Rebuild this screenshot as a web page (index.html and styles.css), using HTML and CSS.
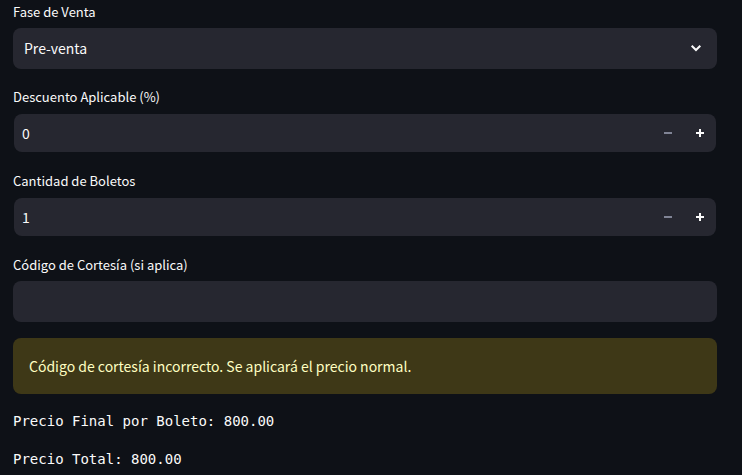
FILE: index.html
```html
<!DOCTYPE html>
<html lang="es">
<head>
<meta charset="utf-8">
<meta name="viewport" content="width=device-width, initial-scale=1">
<title>Venta de boletos</title>
<link rel="stylesheet" href="styles.css">
</head>
<body>
<main class="page">
  <form class="form">
    <div class="field">
      <label class="label" for="fase">Fase de Venta</label>
      <div class="control select-box">
        <select class="select" id="fase">
          <option selected>Pre-venta</option>
        </select>
        <svg class="chevron" viewBox="0 0 12 8" aria-hidden="true"><path d="M1.700 1.700l4.300 4.300 4.300-4.300"/></svg>
      </div>
    </div>
    <div class="field">
      <label class="label" for="descuento">Descuento Aplicable (%)</label>
      <div class="control number-box">
        <input class="number" id="descuento" type="number" min="0" value="0">
        <button class="step" type="button" aria-label="Restar descuento" disabled><svg class="sign" viewBox="0 0 8 8" aria-hidden="true"><path d="M0 3h8v2H0z"/></svg></button>
        <button class="step" type="button" aria-label="Sumar descuento"><svg class="sign" viewBox="0 0 8 8" aria-hidden="true"><path d="M3 0h2v3h3v2H5v3H3V5H0V3h3z"/></svg></button>
      </div>
    </div>
    <div class="field">
      <label class="label" for="cantidad">Cantidad de Boletos</label>
      <div class="control number-box">
        <input class="number" id="cantidad" type="number" min="1" value="1">
        <button class="step" type="button" aria-label="Restar boleto" disabled><svg class="sign" viewBox="0 0 8 8" aria-hidden="true"><path d="M0 3h8v2H0z"/></svg></button>
        <button class="step" type="button" aria-label="Sumar boleto"><svg class="sign" viewBox="0 0 8 8" aria-hidden="true"><path d="M3 0h2v3h3v2H5v3H3V5H0V3h3z"/></svg></button>
      </div>
    </div>
    <div class="field">
      <label class="label" for="codigo">Código de Cortesía (si aplica)</label>
      <input class="control text" id="codigo" type="text">
    </div>
  </form>
  <p class="alert" role="alert">Código de cortesía incorrecto. Se aplicará el precio normal.</p>
  <p class="result">Precio Final por Boleto: 800.00</p>
  <p class="result">Precio Total: 800.00</p>
</main>
</body>
</html>
```
FILE: styles.css
```css
* {
  box-sizing: border-box;
}

body {
  margin: 0;
  background: #0e1117;
  color: #fafafa;
  font-family: "Source Sans Pro", "Noto Sans CJK JP", "Noto Sans", sans-serif;
  font-size: 14px;
}

.page,
.form {
  display: flex;
  flex-direction: column;
  gap: 16px;
}

.page {
  padding: 0 25px 5px 13px;
}

.field {
  display: flex;
  flex-direction: column;
  gap: 4px;
}

.label {
  font-size: 13px;
  line-height: 24px;
}

.control {
  display: flex;
  border: 0;
  border-radius: 8px;
  background: #262730;
}

.select-box {
  position: relative;
  height: 41px;
}

.select,
.number,
.text {
  width: 100%;
  color: inherit;
  font: inherit;
  outline: none;
}

.select {
  appearance: none;
  border: 0;
  padding: 0 40px 1px 11px;
  background: transparent;
}

.chevron {
  position: absolute;
  top: 16px;
  right: 15px;
  width: 12px;
  height: 8px;
  fill: none;
  stroke: #fafafa;
  stroke-width: 2;
  pointer-events: none;
}

.number-box {
  height: 38px;
  margin: 1px;
}

.number {
  appearance: textfield;
  flex: 1;
  min-width: 0;
  border: 0;
  padding: 0 8px;
  background: transparent;
}

.number::-webkit-inner-spin-button {
  appearance: none;
  margin: 0;
}

.step {
  display: flex;
  align-items: center;
  justify-content: center;
  width: 32px;
  border: 0;
  padding: 0;
  background: transparent;
  color: #fafafa;
}

.step:disabled {
  color: #808495;
}

.sign {
  width: 8px;
  height: 8px;
  fill: currentColor;
}

.text {
  height: 41px;
  padding: 0 11px;
}

.alert {
  margin: 0;
  border-radius: 8px;
  padding: 16px;
  background: #3e3817;
  color: #ffffc2;
  line-height: 24px;
}

.result {
  margin: 0;
  font-family: "DejaVu Sans Mono", monospace;
  font-size: 14px;
  line-height: 22px;
}
```
